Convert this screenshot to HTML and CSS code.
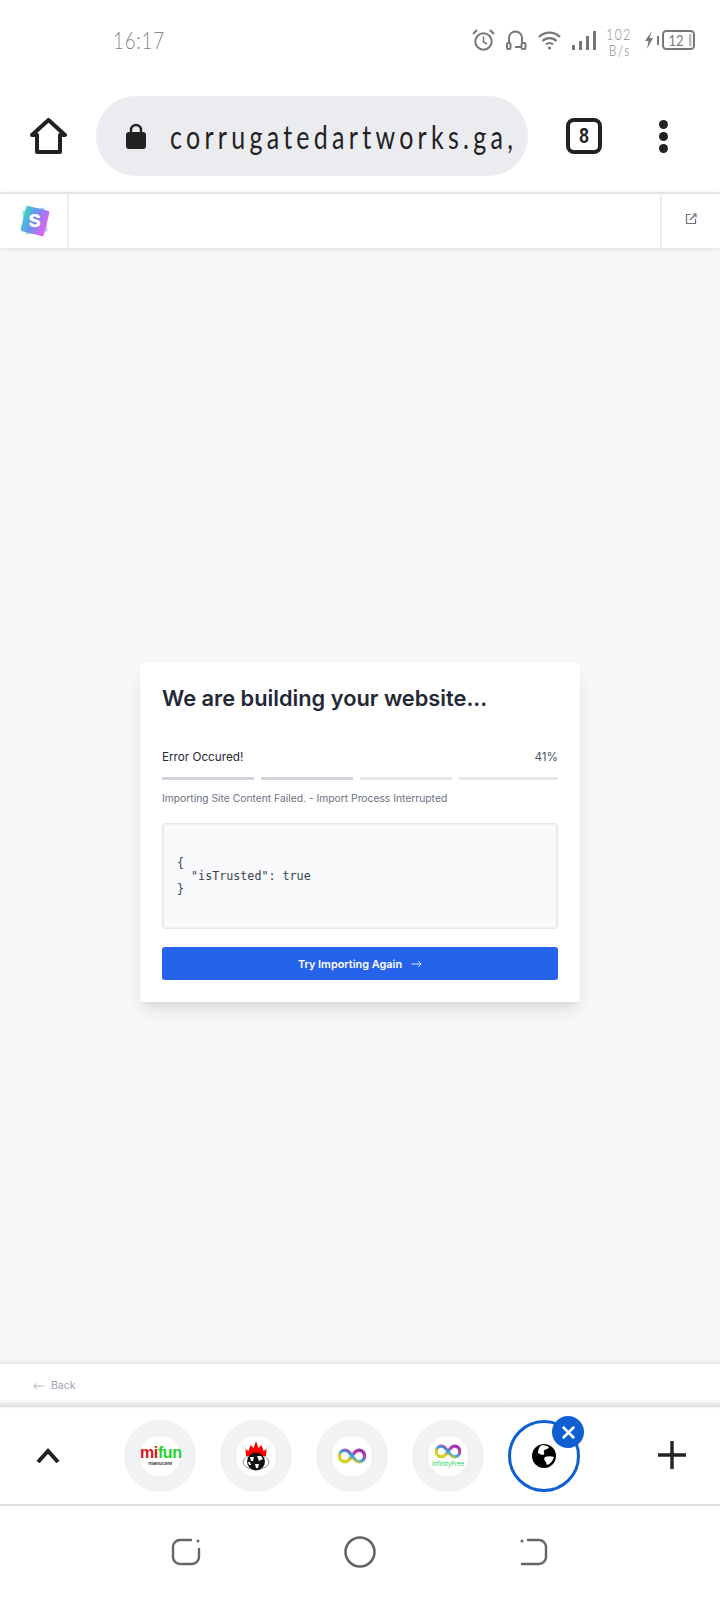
FILE: index.html
```html
<!DOCTYPE html>
<html lang="en">
<head>
    <meta charset="UTF-8">
    <meta name="viewport" content="width=device-width, initial-scale=1.0">
    <title>We are building your website</title>
    <link rel="stylesheet" href="styles.css">
</head>
<body>
    <div class="phone">
        <div class="status-bar">
            <span class="clock">16:17</span>
            <div class="status-icons">
                <svg class="ic-alarm" viewBox="0 0 23 22" fill="none" stroke="#777" stroke-width="2">
                    <circle cx="11.5" cy="12.5" r="8.2"/>
                    <path d="M11.5 7.5v5.5l3.5 2" stroke-width="1.6"/>
                    <path d="M1 5l4-4M22 5l-4-4"/>
                </svg>
                <svg class="ic-phones" viewBox="0 0 21 20" fill="none" stroke="#777" stroke-width="2">
                    <path d="M3 14V8a6.500 6.500 0 0 1 13 0v6"/>
                    <rect x="1" y="13" width="3.5" height="6" rx="1.2"/>
                    <rect x="15.500" y="13" width="4" height="6" rx="1.2"/>
                    <path d="M9 17h6"/>
                </svg>
                <svg class="ic-wifi" viewBox="0 0 23 19" fill="none" stroke="#777" stroke-width="2.2">
                    <path d="M1 6a15 15 0 0 1 21 0M4.5 10a10 10 0 0 1 14 0M8 13.5a5 5 0 0 1 7 0"/>
                    <circle cx="11.5" cy="17" r="1.6" fill="#777" stroke="none"/>
                </svg>
                <svg class="ic-signal" viewBox="0 0 24 19" fill="#777">
                    <rect x="0" y="14" width="3" height="5"/>
                    <rect x="7" y="10" width="3" height="9"/>
                    <rect x="14" y="5" width="3" height="14"/>
                    <rect x="21" y="0" width="3" height="19"/>
                </svg>
                <div class="net-speed"><span>102</span><span>B/s</span></div>
                <svg class="ic-battery" viewBox="0 0 52 20">
                    <path d="M9 1L2 11h3.5L4 19l6-11H6.5z" fill="#777"/>
                    <rect x="14" y="6" width="2" height="9" fill="#777"/>
                    <rect x="20" y="1" width="31" height="18" rx="3.5" fill="none" stroke="#777" stroke-width="2"/>
                    <rect x="46" y="4" width="2.5" height="12" fill="#bbb"/>
                    <text class="battery-level" x="33" y="15.500" text-anchor="middle" textLength="15" lengthAdjust="spacingAndGlyphs">12</text>
                </svg>
            </div>
        </div>

        <div class="toolbar">
            <svg class="ic-home" viewBox="0 0 37 36" fill="none" stroke="#222" stroke-width="4" stroke-linejoin="round">
                <path d="M2 17L18.5 2 35 17h-5v17H7V17z"/>
            </svg>
            <div class="address-bar">
                <svg class="ic-lock" viewBox="0 0 20 26">
                    <path d="M5 11V7a5 5 0 0 1 10 0v4" fill="none" stroke="#222" stroke-width="2.4"/>
                    <rect x="0" y="9" width="20" height="17" rx="3" fill="#222"/>
                </svg>
                <span class="url">corrugatedartworks.ga,</span>
            </div>
            <div class="tab-count"><span>8</span></div>
            <div class="menu-dots"><i></i><i></i><i></i></div>
        </div>

        <div class="preview-bar">
            <div class="preview-logo">
                <div class="logo-mark"><span>S</span></div>
            </div>
            <div class="preview-middle"></div>
            <div class="preview-open">
                <svg viewBox="0 0 12 12" fill="none" stroke="#6b7280" stroke-width="1.2">
                    <path d="M6 1.5H1.5v9h9V6"/>
                    <path d="M5 7l5.5-5.5M7.5 1h3.5v3.5"/>
                </svg>
            </div>
        </div>

        <main class="content">
            <div class="card">
                <h1>We are building your website...</h1>
                <div class="progress-row">
                    <span>Error Occured!</span>
                    <span class="percent">41%</span>
                </div>
                <div class="progress-bars">
                    <div class="bar bar-done"></div>
                    <div class="bar bar-done"></div>
                    <div class="bar"></div>
                    <div class="bar"></div>
                </div>
                <p class="progress-note">Importing Site Content Failed. - Import Process Interrupted</p>
                <pre class="error-box">{
  "isTrusted": true
}</pre>
                <button class="retry">
                    Try Importing Again
                    <svg viewBox="0 0 12 8" fill="none" stroke="#fff" stroke-width="0.9">
                        <path d="M0.5 4h10.5M8 1l3 3-3 3"/>
                    </svg>
                </button>
            </div>
        </main>

        <div class="back-bar">
            <svg viewBox="0 0 12 8" fill="none" stroke="#9ca3af" stroke-width="0.9">
                <path d="M11.5 4H1M4 1L1 4l3 3"/>
            </svg>
            <span>Back</span>
        </div>

        <div class="tab-strip">
            <svg class="ic-chevron" viewBox="0 0 24 15" fill="none" stroke="#222" stroke-width="4">
                <path d="M2 14L12 3l10 11"/>
            </svg>
            <div class="tabs">
                <div class="tab">
                    <div class="favicon">
                        <div class="mifun">
                            <div class="mifun-name">mi<b>fun</b></div>
                            <div class="mifun-sub">TEAM BUILDERS</div>
                        </div>
                    </div>
                </div>
                <div class="tab">
                    <div class="favicon">
                        <svg class="fav-globe" viewBox="0 0 28 30">
                            <path d="M4 15L3.500 8l3 2 2-6 3 3 2.500-7 2.500 7 3-3 2 6 3-2-.5 7z" fill="#f00"/>
                            <ellipse cx="14" cy="21" rx="13" ry="7.500" fill="none" stroke="#777" stroke-width="0.8"/>
                            <circle cx="14" cy="20.500" r="9" fill="#111"/>
                            <path d="M8 16h4l-1 4h-2zM15 15h4l2 3-4 2zM13 23h4l-1 4h-2zM6 21h2l1 3H7z" fill="#fff"/>
                        </svg>
                    </div>
                </div>
                <div class="tab">
                    <div class="favicon">
                        <svg class="fav-infinity" viewBox="0 0 24 14">
                            <use href="#infinityLoop"/>
                        </svg>
                    </div>
                </div>
                <div class="tab">
                    <div class="favicon favicon-stack">
                        <svg class="fav-infinity-small" viewBox="0 0 24 14">
                            <use href="#infinityLoop"/>
                        </svg>
                        <span class="infinity-name">InfinityFree</span>
                    </div>
                </div>
                <div class="tab tab-active">
                    <svg class="fav-earth" viewBox="0 0 24 24">
                        <circle cx="12" cy="12" r="12" fill="#000"/>
                        <path d="M9 1.500c4-1 7 .5 8 2-1 2-4 1.500-5 3-1 1.500 1 2.500 0 4-2 1-4-.5-6-1.500C6 6 7 3 9 1.500zM13 13c3-1 6-1 9 0-1 4-4 7-7 8-1-2-.5-3-2-4-1-2-1-3 0-4z" fill="#fff"/>
                    </svg>
                    <div class="tab-close">
                        <svg viewBox="0 0 16 16" fill="none" stroke="#fff" stroke-width="3">
                            <path d="M2 2l12 12M14 2L2 14"/>
                        </svg>
                    </div>
                </div>
            </div>
            <svg class="ic-plus" viewBox="0 0 28 28" fill="none" stroke="#222" stroke-width="3.400">
                <path d="M14 0v28M0 14h28"/>
            </svg>
        </div>

        <div class="nav-bar">
            <svg class="nav-recent" viewBox="0 0 30 28" fill="none" stroke="#666" stroke-width="2.400" stroke-linecap="round">
                <path d="M20 2H9a7 7 0 0 0-7 7v10a7 7 0 0 0 7 7h12a7 7 0 0 0 7-7V11"/>
                <circle cx="27" cy="3" r="1.500" fill="#666" stroke="none"/>
            </svg>
            <svg class="nav-home" viewBox="0 0 32 32" fill="none" stroke="#666" stroke-width="2.600">
                <circle cx="16" cy="16" r="14.500"/>
            </svg>
            <svg class="nav-back" viewBox="0 0 28 28" fill="none" stroke="#666" stroke-width="2.400" stroke-linecap="round">
                <path d="M8 2h11a7 7 0 0 1 7 7v10a7 7 0 0 1-7 7H2"/>
                <circle cx="2" cy="3" r="1.500" fill="#666" stroke="none"/>
            </svg>
        </div>
    </div>

    <svg class="svg-defs" width="0" height="0">
        <defs>
            <linearGradient id="infinityColors" x1="0" x2="1" y1="1" y2="0">
                <stop offset="0.1" stop-color="#c8dc20"/>
                <stop offset="0.28" stop-color="#f5c518"/>
                <stop offset="0.5" stop-color="#29abe2"/>
                <stop offset="0.72" stop-color="#c03ab0"/>
                <stop offset="1" stop-color="#8d30a8"/>
            </linearGradient>
            <path id="infinityLoop" d="M12 7C10 4 8.500 2 6 2a5 5 0 0 0 0 10c2.500 0 4-2 6-5s3.500-5 6-5a5 5 0 0 1 0 10c-2.500 0-4-2-6-5z" fill="none" stroke="url(#infinityColors)" stroke-width="3"/>
        </defs>
    </svg>
</body>
</html>
```

FILE: styles.css
```css
* {
    box-sizing: border-box;
}
body {
    margin: 0;
    background-color: white;
    font-family: Inter, "Liberation Sans", sans-serif;
}
.phone {
    width: 720px;
    height: 1600px;
    display: flex;
    flex-direction: column;
    overflow: hidden;
}
.svg-defs {
    display: block;
    height: 0;
}

/* status bar */
.status-bar {
    height: 96px;
    flex-shrink: 0;
    display: flex;
    align-items: flex-start;
    padding: 26px 25px 0 113px;
    color: #888;
}
.clock {
    width: 50px;
    font-family: Lato, sans-serif;
    font-size: 24px;
    font-weight: 300;
    line-height: 28px;
    letter-spacing: 1px;
    white-space: nowrap;
    transform: scaleX(0.78);
    transform-origin: left center;
}
.status-icons {
    margin-left: auto;
    display: flex;
    align-items: flex-start;
    gap: 11px;
}
.ic-alarm {
    width: 23px;
    height: 22px;
    margin-top: 3px;
}
.ic-phones {
    width: 21px;
    height: 20px;
    margin-top: 4px;
}
.ic-wifi {
    width: 23px;
    height: 19px;
    margin-top: 5px;
}
.ic-signal {
    width: 24px;
    height: 19px;
    margin-top: 5px;
}
.net-speed {
    width: 25px;
    display: flex;
    flex-direction: column;
    align-items: center;
    font-family: Lato, sans-serif;
    font-size: 15px;
    font-weight: 300;
    line-height: 16px;
    letter-spacing: 2px;
    color: #888;
}
.net-speed span {
    transform: scaleX(0.8);
}
.ic-battery {
    width: 52px;
    height: 20px;
    margin-top: 4px;
}
.battery-level {
    font-family: Lato, sans-serif;
    font-size: 15px;
    fill: #777;
}

/* browser toolbar */
.toolbar {
    height: 96px;
    flex-shrink: 0;
    display: flex;
    align-items: flex-start;
    padding-left: 30px;
}
.ic-home {
    width: 37px;
    height: 36px;
    margin-top: 22px;
}
.address-bar {
    width: 432px;
    height: 80px;
    margin-left: 29px;
    padding-left: 30px;
    display: flex;
    align-items: center;
    background-color: #ebecf0;
    border-radius: 40px;
}
.ic-lock {
    width: 20px;
    height: 26px;
    flex-shrink: 0;
}
.url {
    margin-left: 24px;
    flex-shrink: 0;
    font-family: Lato, sans-serif;
    font-size: 32px;
    letter-spacing: 5.500px;
    white-space: nowrap;
    color: #222;
    transform: scaleX(0.78);
    transform-origin: left center;
}
.tab-count {
    width: 36px;
    height: 36px;
    margin-top: 22px;
    margin-left: 38px;
    display: flex;
    align-items: center;
    justify-content: center;
    border: 4px solid #222;
    border-radius: 8px;
    font-family: "Liberation Sans", sans-serif;
    font-size: 22px;
    font-weight: bold;
    color: #222;
}
.tab-count span {
    transform: scaleX(0.78);
}
.menu-dots {
    margin-top: 24px;
    margin-left: 57px;
    display: flex;
    flex-direction: column;
    gap: 3px;
}
.menu-dots i {
    display: block;
    width: 9px;
    height: 9px;
    border-radius: 50%;
    background-color: #222;
}

/* builder preview bar */
.preview-bar {
    height: 56px;
    flex-shrink: 0;
    display: flex;
    background-color: white;
    border-top: 2px solid #e3e3e3;
    box-shadow: 0 1px 4px rgba(0,0,0,0.1);
    position: relative;
}
.preview-logo {
    width: 69px;
    padding-left: 2px;
    display: flex;
    align-items: center;
    justify-content: center;
    border-right: 2px solid #eeeeee;
}
.logo-mark {
    width: 24px;
    height: 26px;
    display: flex;
    align-items: center;
    justify-content: center;
    transform: rotate(14deg);
    position: relative;
}
/* faint second square behind the mark */
.logo-mark::before {
    content: "";
    position: absolute;
    inset: 1px;
    z-index: -1;
    background: linear-gradient(100deg, #7cf0c0, #a0d0f5);
    transform: rotate(-22deg);
}
.logo-mark::after {
    content: "";
    position: absolute;
    inset: 0;
    z-index: -1;
    border-radius: 2px;
    background: linear-gradient(100deg, #38d6c6, #6f8ef5 45%, #f25cf0);
}
.logo-mark span {
    transform: rotate(-14deg) scaleX(1.1);
    font-size: 17px;
    font-weight: 800;
    color: white;
}
.preview-middle {
    flex-grow: 1;
}
.preview-open {
    width: 60px;
    display: flex;
    align-items: center;
    justify-content: center;
    border-left: 2px solid #eeeeee;
}
.preview-open svg {
    width: 12px;
    height: 12px;
    margin-bottom: 4px;
}

/* main card */
.content {
    flex-grow: 1;
    display: flex;
    justify-content: center;
    align-items: flex-start;
    padding-top: 415px;
    background-color: #f6f7f9;
}
.card {
    width: 440px;
    padding: 22px;
    background-color: white;
    border-radius: 3px;
    box-shadow: 0 10px 15px -3px rgba(0,0,0,0.1), 0 4px 6px -2px rgba(0,0,0,0.05);
}
.card h1 {
    margin: 0;
    font-size: 21.800px;
    line-height: 26px;
    font-weight: 600;
    color: #1f2937;
}
.progress-row {
    margin-top: 39px;
    display: flex;
    justify-content: space-between;
    font-size: 11.700px;
    line-height: 14px;
    color: #1f2937;
}
.percent {
    color: #4b5563;
}
.progress-bars {
    margin-top: 13px;
    display: grid;
    grid-template-columns: 92px 92px 92px 1fr;
    gap: 7px;
}
.bar {
    height: 3px;
    background-color: #e5e7eb;
}
.bar-done {
    background-color: #d1d5db;
}
.progress-note {
    margin: 10px 0 0;
    font-size: 10.300px;
    line-height: 16px;
    color: #6b7280;
}
.error-box {
    height: 106px;
    margin: 17px 0 0;
    padding: 33px 14px 0;
    background-color: #f9fafb;
    border: 1px solid #e5e7eb;
    box-shadow: inset 0 0 0 1px #eef0f2;
    border-radius: 3px;
    font-family: "DejaVu Sans Mono", monospace;
    font-size: 11.700px;
    line-height: 13px;
    color: #374151;
}
.retry {
    width: 100%;
    height: 33px;
    margin-top: 18px;
    display: flex;
    align-items: center;
    justify-content: center;
    gap: 9px;
    background-color: #2563eb;
    color: white;
    border: none;
    border-radius: 3px;
    font-family: Inter, sans-serif;
    font-size: 10.900px;
    font-weight: 600;
}
.retry svg {
    width: 11px;
    height: 8px;
}

/* back link */
.back-bar {
    height: 43px;
    flex-shrink: 0;
    display: flex;
    align-items: center;
    gap: 7px;
    padding: 0 0 0 33px;
    background: linear-gradient(to bottom, white 82%, #dddddd);
    box-shadow: 0 -1px 4px rgba(0,0,0,0.12);
    font-size: 10.500px;
    color: #9ca3af;
    position: relative;
}
.back-bar svg {
    width: 11px;
    height: 8px;
}

/* open tabs strip */
.tab-strip {
    height: 99px;
    flex-shrink: 0;
    display: flex;
    align-items: flex-start;
    border-bottom: 2px solid #e0e0e0;
    background-color: white;
}
.ic-chevron {
    width: 24px;
    height: 15px;
    margin: 41px 0 0 36px;
}
.tabs {
    margin-left: 64px;
    margin-top: 13px;
    display: flex;
    gap: 24px;
}
.tab {
    width: 72px;
    height: 72px;
    display: flex;
    align-items: center;
    justify-content: center;
    border-radius: 50%;
    background-color: #f1f2f4;
    position: relative;
}
.tab-active {
    background-color: white;
    border: 3px solid #0e5fd2;
}
.favicon {
    width: 40px;
    height: 40px;
    display: flex;
    align-items: center;
    justify-content: center;
    border-radius: 50%;
    background-color: white;
}
.favicon-stack {
    flex-direction: column;
}
.mifun {
    width: 40px;
    text-align: center;
}
.mifun-name {
    font-family: "Liberation Sans", sans-serif;
    font-size: 16px;
    line-height: 13px;
    font-weight: bold;
    letter-spacing: -0.4px;
    color: #e01020;
}
.mifun-name b {
    color: #22d32a;
}
.mifun-sub {
    margin-top: 3px;
    font-size: 3px;
    line-height: 4px;
    font-weight: 700;
    white-space: nowrap;
    color: #222;
}
.fav-globe {
    width: 28px;
    height: 30px;
}
.fav-infinity {
    width: 28px;
    height: 16px;
}
.fav-infinity-small {
    width: 26px;
    height: 15px;
    margin-top: -1px;
}
.infinity-name {
    margin-top: 2px;
    font-size: 6px;
    line-height: 6px;
    white-space: nowrap;
    color: #22d060;
}
.fav-earth {
    width: 24px;
    height: 24px;
}
.tab-close {
    width: 32px;
    height: 32px;
    display: flex;
    align-items: center;
    justify-content: center;
    border-radius: 50%;
    background-color: #0e5fd2;
    position: absolute;
    top: -7px;
    right: -7px;
}
.tab-close svg {
    width: 15px;
    height: 15px;
}
.ic-plus {
    width: 28px;
    height: 28px;
    margin: 34px 34px 0 auto;
}

/* android navigation */
.nav-bar {
    height: 94px;
    flex-shrink: 0;
    display: grid;
    grid-template-columns: repeat(3, 174px);
    justify-content: center;
    align-items: center;
    justify-items: center;
    padding-bottom: 2px;
}
.nav-recent {
    width: 30px;
    height: 28px;
}
.nav-home {
    width: 32px;
    height: 32px;
}
.nav-back {
    width: 28px;
    height: 28px;
}
```
